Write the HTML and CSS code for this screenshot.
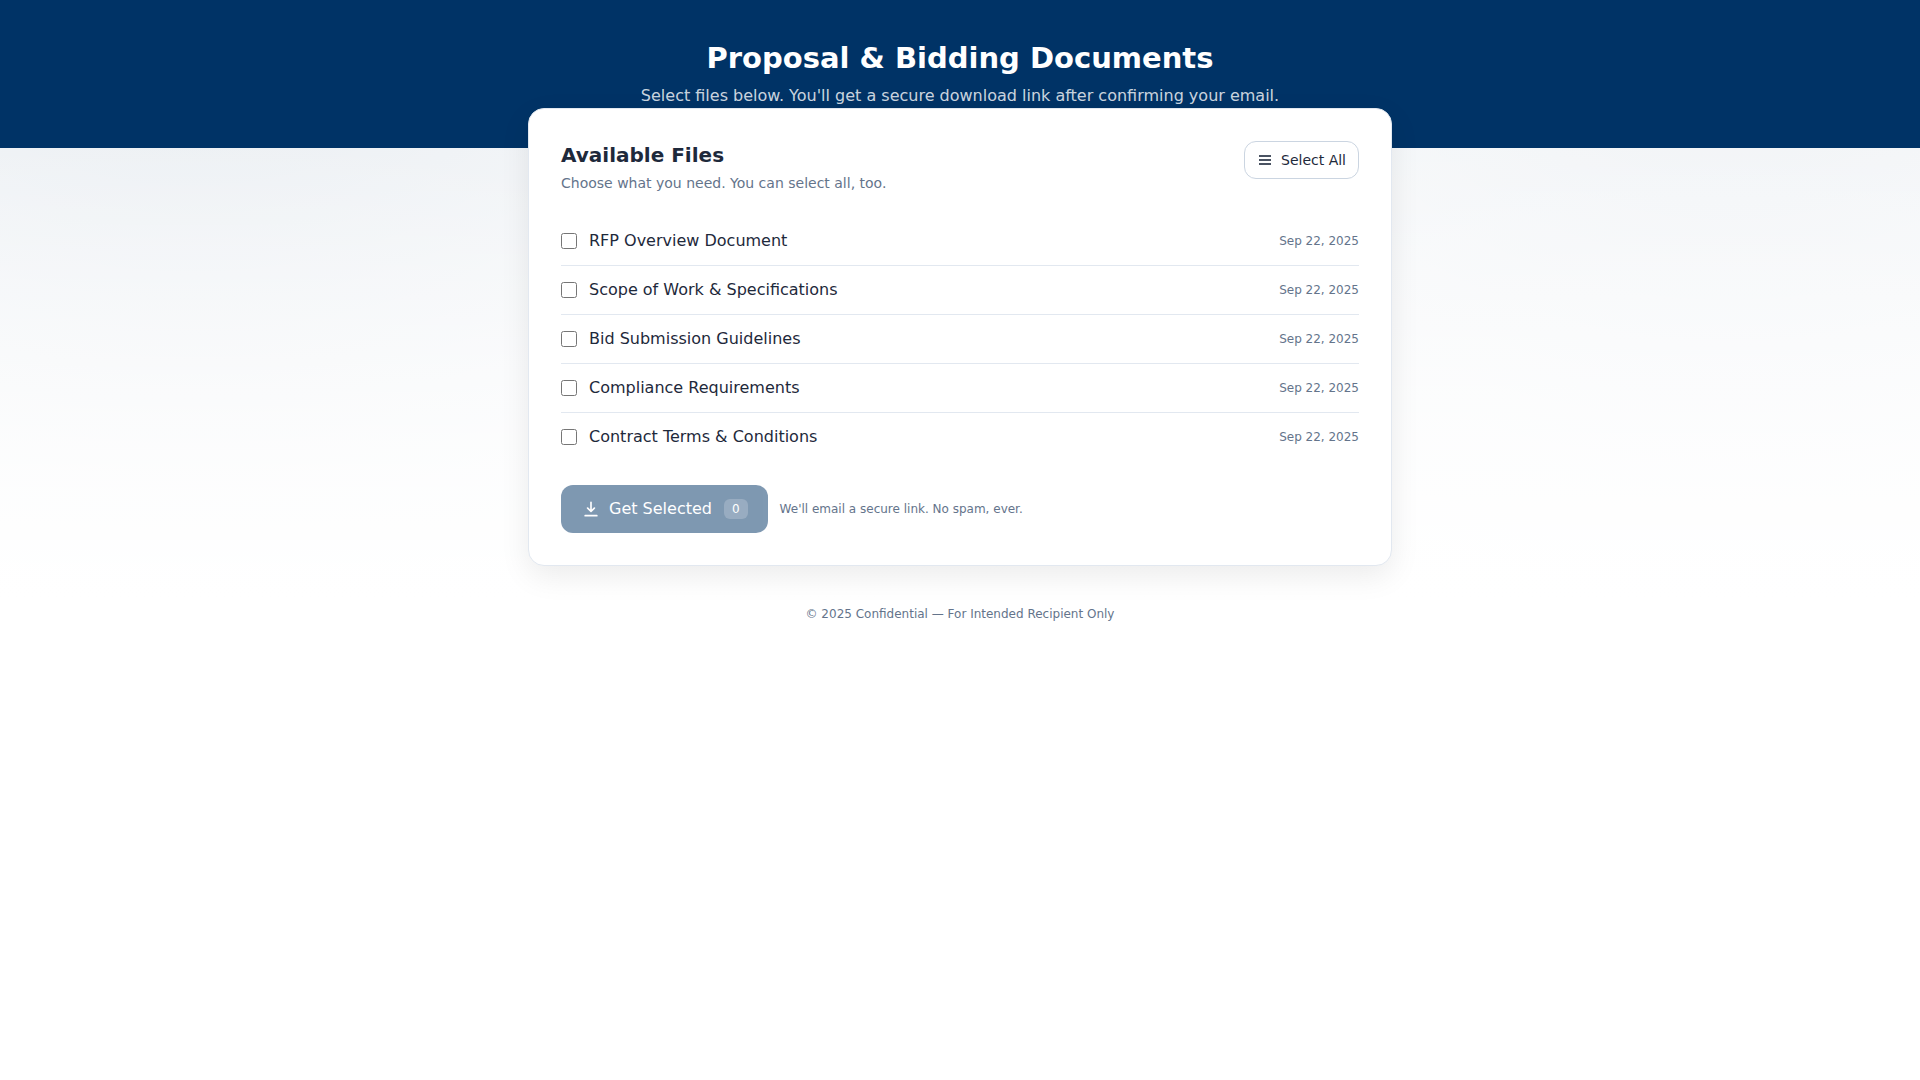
FILE: index.html
```html
<!DOCTYPE html>
<html lang="en">
<head>
    <meta charset="UTF-8">
    <meta name="viewport" content="width=device-width, initial-scale=1.0">
    <title>Proposal &amp; Bidding Documents</title>
    <link rel="stylesheet" href="styles.css">
</head>
<body>
    <!-- Header -->
    <header class="page-header">
        <h1>Proposal &amp; Bidding Documents</h1>
        <p>Select files below. You'll get a secure download link after confirming your email.</p>
    </header>

    <main class="container">
        <form class="card">
            <div class="card-header">
                <div>
                    <h2>Available Files</h2>
                    <p class="card-subtitle">Choose what you need. You can select all, too.</p>
                </div>
                <button type="button" class="btn-outline">
                    <svg class="icon-list" viewBox="0 0 16 16" fill="currentColor" aria-hidden="true">
                        <path d="M2 3h12v2H2zM2 7h12v2H2zM2 11h12v2H2z"/>
                    </svg>
                    <span>Select All</span>
                </button>
            </div>

            <!-- File list -->
            <ul class="file-list">
                <li class="file-item">
                    <label><input type="checkbox" name="files" value="rfp"> RFP Overview Document</label>
                    <span class="file-date">Sep 22, 2025</span>
                </li>
                <li class="file-item">
                    <label><input type="checkbox" name="files" value="scope"> Scope of Work &amp; Specifications</label>
                    <span class="file-date">Sep 22, 2025</span>
                </li>
                <li class="file-item">
                    <label><input type="checkbox" name="files" value="guidelines"> Bid Submission Guidelines</label>
                    <span class="file-date">Sep 22, 2025</span>
                </li>
                <li class="file-item">
                    <label><input type="checkbox" name="files" value="compliance"> Compliance Requirements</label>
                    <span class="file-date">Sep 22, 2025</span>
                </li>
                <li class="file-item">
                    <label><input type="checkbox" name="files" value="terms"> Contract Terms &amp; Conditions</label>
                    <span class="file-date">Sep 22, 2025</span>
                </li>
            </ul>

            <!-- Actions -->
            <div class="actions">
                <button type="submit" class="btn-primary" disabled>
                    <svg class="icon-download" viewBox="0 0 24 24" fill="currentColor" aria-hidden="true">
                        <path d="M12 3a1 1 0 0 1 1 1v8.6l2.3-2.3a1 1 0 1 1 1.4 1.4l-4 4a1 1 0 0 1-1.4 0l-4-4a1 1 0 1 1 1.4-1.4l2.3 2.3V4a1 1 0 0 1 1-1zM5 19h14a1 1 0 1 1 0 2H5a1 1 0 1 1 0-2z"/>
                    </svg>
                    <span>Get Selected</span>
                    <span class="count">0</span>
                </button>
                <p class="hint">We'll email a secure link. No spam, ever.</p>
            </div>
        </form>
    </main>

    <footer class="page-footer">© 2025 Confidential — For Intended Recipient Only</footer>
</body>
</html>
```
FILE: styles.css
```css
* {
    box-sizing: border-box;
}

body {
    font-family: "DejaVu Sans", sans-serif;
    font-size: 16px;
    line-height: 24px;
    margin: 0;
    min-height: 100vh;
    color: #1e293b;
    background:
        linear-gradient(rgba(255, 255, 255, 0), #fff 600px),
        radial-gradient(1200px 800px at 10% 0, rgba(0, 51, 102, 0.11), rgba(0, 51, 102, 0)),
        radial-gradient(1100px 800px at 90% 0, rgba(0, 51, 102, 0.08), rgba(0, 51, 102, 0)),
        #fff;
}

h1, h2, p, ul {
    margin: 0;
    padding: 0;
}

button {
    font-family: inherit;
    cursor: pointer;
}

.page-header {
    padding: 40px 16px;
    background-color: #003366;
    color: #ffffff;
    text-align: center;
}

.page-header h1 {
    font-size: 29px;
    line-height: 36px;
}

.page-header p {
    margin-top: 8px;
    color: rgba(255, 255, 255, 0.8);
}

.container {
    max-width: 896px;
    margin: -40px auto 0;
    padding: 0 16px;
}

.card {
    background-color: #ffffff;
    border: 1px solid #e2e8f0;
    border-radius: 16px;
    padding: 32px;
    box-shadow: 0 10px 30px rgba(0, 0, 0, 0.08);
}

.card-header {
    display: flex;
    justify-content: space-between;
    align-items: flex-start;
    gap: 16px;
}

.card-header h2 {
    font-size: 20px;
    line-height: 28px;
}

.card-subtitle {
    margin-top: 4px;
    font-size: 14px;
    line-height: 20px;
    color: #64748b;
}

.btn-outline {
    display: flex;
    align-items: center;
    gap: 8px;
    padding: 8px 12px;
    border: 1px solid #cbd5e1;
    border-radius: 12px;
    background-color: #ffffff;
    color: #1e293b;
    font-size: 14px;
    line-height: 20px;
}

.icon-list {
    width: 16px;
    height: 16px;
    opacity: 0.8;
}

.file-list {
    margin-top: 24px;
    list-style: none;
}

.file-item {
    display: flex;
    justify-content: space-between;
    align-items: center;
    padding: 12px 0;
}

.file-item + .file-item {
    border-top: 1px solid #e2e8f0;
}

.file-item label {
    display: flex;
    align-items: center;
    gap: 12px;
}

.file-item input {
    width: 16px;
    height: 16px;
    margin: 0;
}

.file-date,
.hint,
.page-footer {
    font-size: 12px;
    line-height: 16px;
    color: #64748b;
}

.actions {
    display: flex;
    align-items: center;
    gap: 12px;
    margin-top: 24px;
}

.btn-primary {
    display: flex;
    align-items: center;
    gap: 8px;
    padding: 12px 20px;
    border: none;
    border-radius: 12px;
    background-color: #003366;
    color: #ffffff;
    font-size: 16px;
    line-height: 24px;
}

.btn-primary:disabled {
    opacity: 0.5;
    cursor: not-allowed;
}

.icon-download {
    width: 20px;
    height: 20px;
}

.count {
    margin-left: 4px;
    padding: 2px 8px;
    border-radius: 6px;
    background-color: rgba(255, 255, 255, 0.2);
    font-size: 12px;
    line-height: 16px;
}

.page-footer {
    padding: 40px 16px;
    text-align: center;
}
```
